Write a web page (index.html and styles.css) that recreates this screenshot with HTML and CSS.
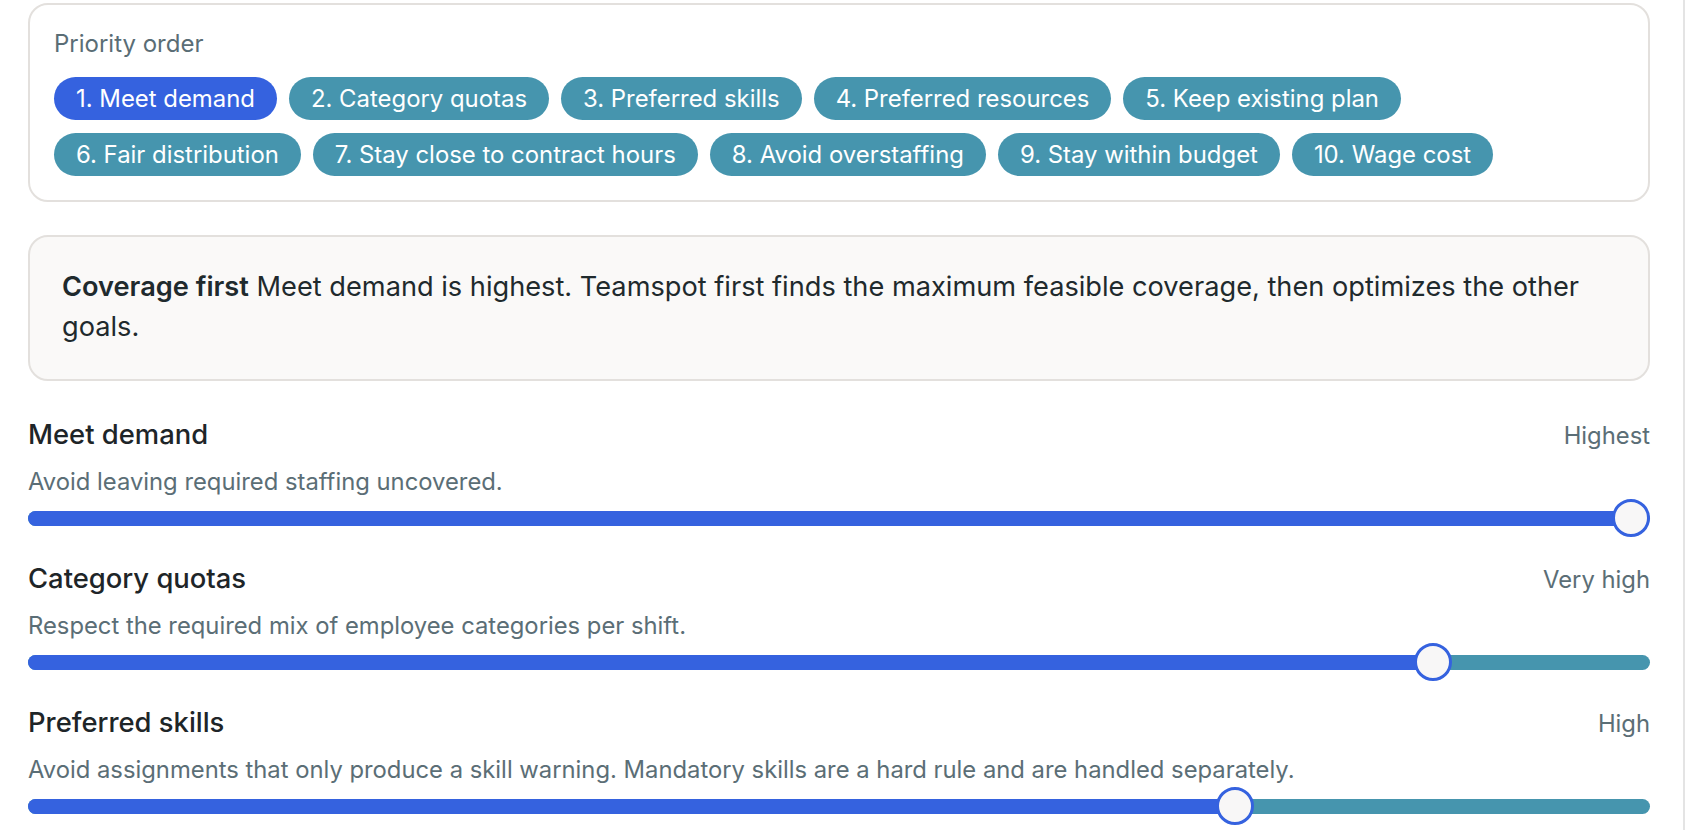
FILE: index.html
```html
<!DOCTYPE html>
<html lang="en">
<head>
    <meta charset="UTF-8">
    <meta name="viewport" content="width=device-width, initial-scale=1.0">
    <title>Optimizer priorities</title>
    <link rel="stylesheet" href="styles.css">
</head>
<body>
    <div class="panel">
        <!-- Priority order -->
        <div class="card priority-card">
            <div class="card-label">Priority order</div>
            <div class="chips">
                <span class="chip active">1. Meet demand</span>
                <span class="chip">2. Category quotas</span>
                <span class="chip">3. Preferred skills</span>
                <span class="chip">4. Preferred resources</span>
                <span class="chip">5. Keep existing plan</span>
                <span class="chip">6. Fair distribution</span>
                <span class="chip">7. Stay close to contract hours</span>
                <span class="chip">8. Avoid overstaffing</span>
                <span class="chip">9. Stay within budget</span>
                <span class="chip">10. Wage cost</span>
            </div>
        </div>

        <!-- Mode hint -->
        <div class="card hint-card">
            <p><strong>Coverage first</strong> Meet demand is highest. Teamspot first finds the maximum feasible coverage, then optimizes the other goals.</p>
        </div>

        <!-- Goal weights -->
        <div class="goal">
            <div class="goal-head">
                <span class="goal-title">Meet demand</span>
                <span class="goal-level">Highest</span>
            </div>
            <div class="goal-desc">Avoid leaving required staffing uncovered.</div>
            <div class="slider">
                <div class="track"><div class="fill" style="width: calc((100% - 38px) * 1 + 19px)"></div></div>
                <div class="thumb" style="left: calc((100% - 38px) * 1)"></div>
            </div>
        </div>

        <div class="goal">
            <div class="goal-head">
                <span class="goal-title">Category quotas</span>
                <span class="goal-level">Very high</span>
            </div>
            <div class="goal-desc">Respect the required mix of employee categories per shift.</div>
            <div class="slider">
                <div class="track"><div class="fill" style="width: calc((100% - 38px) * 0.875 + 19px)"></div></div>
                <div class="thumb" style="left: calc((100% - 38px) * 0.875)"></div>
            </div>
        </div>

        <div class="goal">
            <div class="goal-head">
                <span class="goal-title">Preferred skills</span>
                <span class="goal-level">High</span>
            </div>
            <div class="goal-desc">Avoid assignments that only produce a skill warning. Mandatory skills are a hard rule and are handled separately.</div>
            <div class="slider">
                <div class="track"><div class="fill" style="width: calc((100% - 38px) * 0.75 + 19px)"></div></div>
                <div class="thumb" style="left: calc((100% - 38px) * 0.75)"></div>
            </div>
        </div>
    </div>
</body>
</html>
```
FILE: styles.css
```css
body {
    margin: 0;
    font-family: Inter, "Noto Sans", sans-serif;
    background: #ffffff;
    color: #1e2629;
    height: 830px;
    overflow: hidden;
}

.panel {
    box-sizing: border-box;
    width: 1685px;
    height: 100%;
    padding: 3px 33px 0 28px;
    border-right: 2px solid #e4e4e4;
}

.card {
    border: 2px solid #e3e0dd;
    border-radius: 20px;
}

/* Priority order */
.priority-card {
    padding: 24px;
}

.card-label {
    font-size: 24px;
    line-height: 30px;
    color: #5a6d75;
    margin-bottom: 18px;
}

.chips {
    display: flex;
    flex-wrap: wrap;
    gap: 13px 12px;
}

.chip {
    height: 43px;
    line-height: 43px;
    padding: 0 22px;
    border-radius: 22px;
    background: #4695ae;
    color: #ffffff;
    font-size: 23.9px;
    white-space: nowrap;
}

.chip.active {
    background: #3562df;
}

/* Hint */
.hint-card {
    margin-top: 33px;
    padding: 30px 32px 32px;
    background: #faf9f8;
}

.hint-card p {
    margin: 0;
    font-size: 27.2px;
    line-height: 40px;
    color: #1f2a2d;
}

.hint-card strong {
    font-weight: 600;
}

/* Goals */
.goal {
    margin-top: 23px;
}

.hint-card + .goal {
    margin-top: 35px;
}

.goal-head {
    display: flex;
    justify-content: space-between;
    align-items: baseline;
    height: 36px;
    line-height: 36px;
}

.goal-title {
    font-size: 27.4px;
    font-weight: 500;
    color: #1e2528;
}

.goal-level {
    font-size: 23.8px;
    color: #5b6e76;
}

.goal-desc {
    margin-top: 15px;
    font-size: 23.8px;
    line-height: 30px;
    color: #5b6e76;
}

.slider {
    position: relative;
    height: 38px;
    margin-top: 2px;
    display: flex;
    align-items: center;
}

.track {
    width: 100%;
    height: 15px;
    border-radius: 8px;
    background: #4695ae;
    overflow: hidden;
}

.fill {
    height: 100%;
    background: #3562df;
}

.thumb {
    position: absolute;
    top: 0;
    box-sizing: border-box;
    width: 38px;
    height: 38px;
    border: 3px solid #3562df;
    border-radius: 50%;
    background: #f8f7f7;
}
```
